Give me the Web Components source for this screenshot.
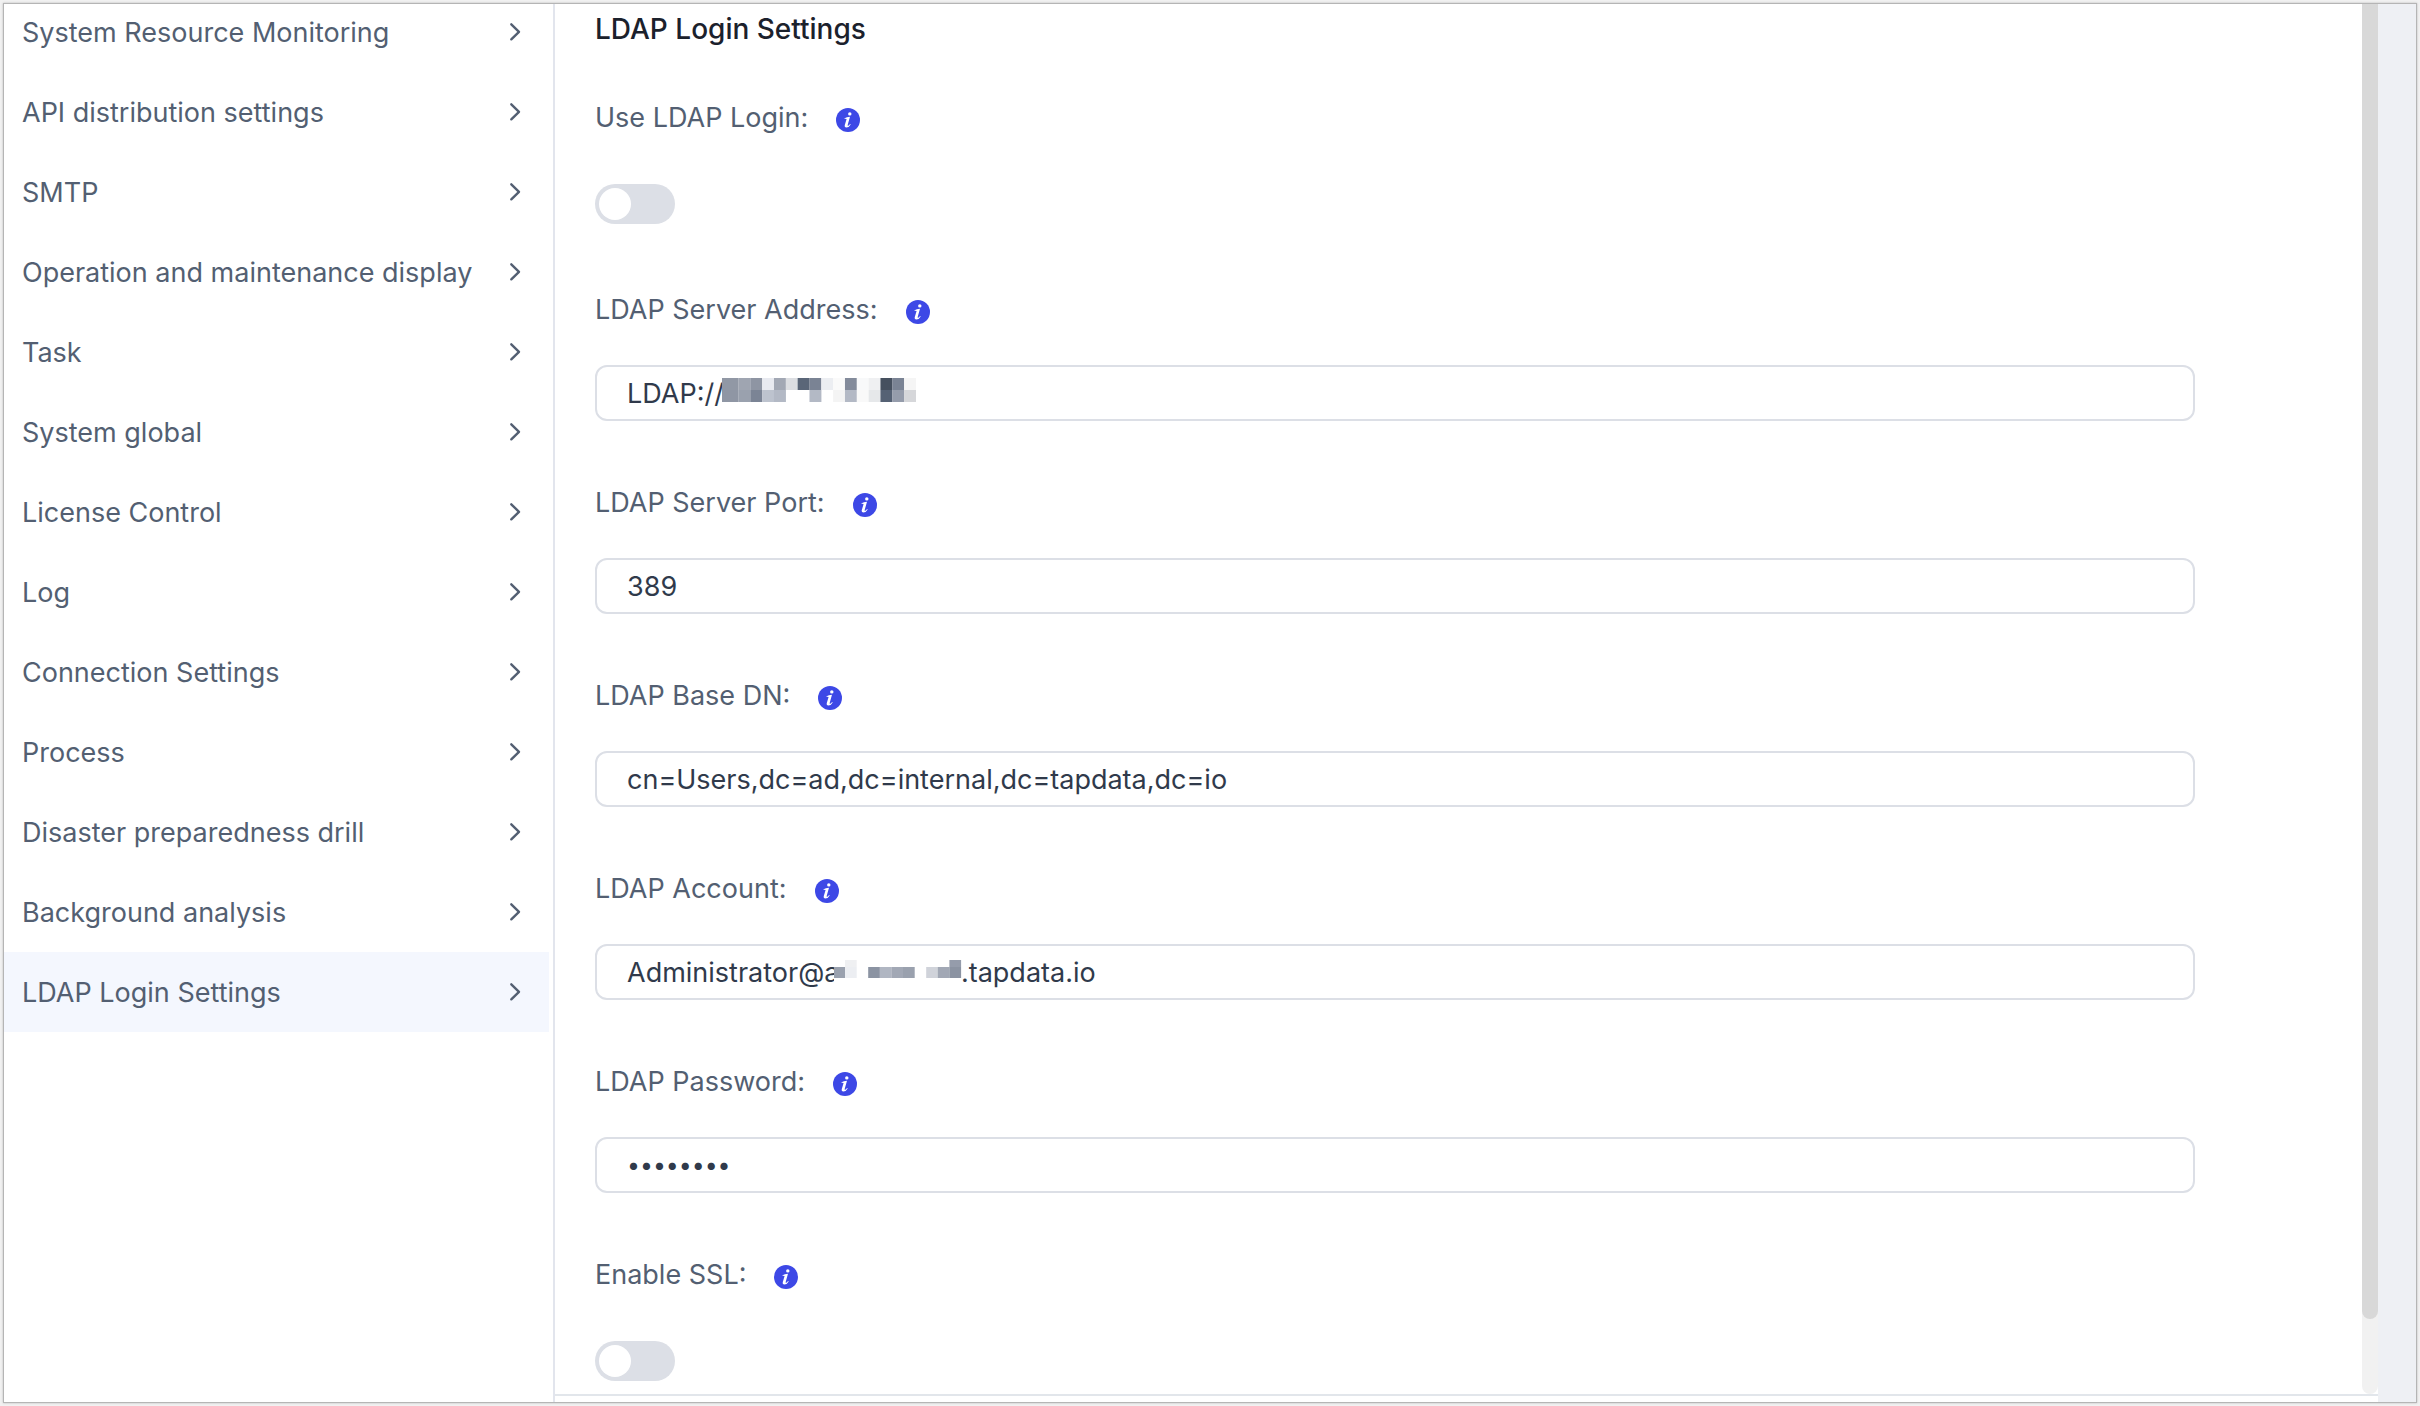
<!DOCTYPE html>
<html lang="en">
<head>
<meta charset="utf-8">
<title>LDAP Login Settings</title>
<style>
html,body{height:100%}
body{margin:0;background:#f1f1f1;font-family:Inter,"Liberation Sans",sans-serif;font-size:27px;color:#535f72}
</style>
</head>
<body>
<settings-app></settings-app>
<script>
const make = (name, html, after) => customElements.define(name, class extends HTMLElement {
  connectedCallback() {
    if (this.shadowRoot) return;
    const root = this.attachShadow({ mode: 'open' });
    const t = document.createElement('template');
    t.innerHTML = html;
    root.append(t.content.cloneNode(true));
    if (after) after.call(this, root);
  }
});

make('menu-item', `
<style>
:host{display:block}
a{display:flex;align-items:center;justify-content:space-between;height:80px;box-sizing:border-box;padding:0 28px 0 18px;color:inherit;text-decoration:none;white-space:nowrap}
:host([active]) a{background:#f4f7fe}
svg{width:12px;height:20px;flex:none}
</style>
<a href="#"><slot></slot><svg viewBox="0 0 12 20" fill="none" stroke="#535f72" stroke-width="2.4" stroke-linecap="round" stroke-linejoin="round"><path d="M2.3 2.3 10 9.8 2.3 17.3"/></svg></a>`,
function (root) { if (this.hasAttribute('active')) root.querySelector('a').setAttribute('aria-current', 'page'); });

make('info-icon', `
<style>:host{display:block;width:24px;height:24px}svg{display:block}</style>
<svg width="24" height="24" viewBox="0 0 24 24"><circle cx="12" cy="12" r="12" fill="#3d48e6"/><circle cx="13.8" cy="5.9" r="1.7" fill="#fff"/><path d="M8.6 10.3Q10.6 9 14 8.8L11.8 16.6Q11.4 18.2 12.3 17.8 13.2 17.2 14.1 16L14.7 16.4Q12.9 19.6 10.3 19.6 8.2 19.4 8.8 17.1L10.6 11.1Q10.1 10.6 8.6 11Z" fill="#fff"/></svg>`);

const labelCss = `
:host{display:block;padding-bottom:49px}
.label{display:flex;align-items:center;gap:28px;height:64px;margin-bottom:24px}
.label info-icon{margin-top:6px}`;

make('text-field', `
<style>${labelCss}
.control{position:relative}
input{display:block;box-sizing:border-box;width:100%;height:56px;padding:0 30px;border:2px solid #dcdfe6;border-radius:12px;background:#fff;color:#303a4b;font:inherit;outline:none}
input[type=password]{font-size:23px}
::slotted(*){position:absolute;top:0;left:0}
</style>
<div class="label"><label for="f"></label><info-icon></info-icon></div>
<div class="control"><input id="f"><slot></slot></div>`,
function (root) {
  root.querySelector('label').textContent = this.getAttribute('label');
  const input = root.querySelector('input');
  input.type = this.getAttribute('type') || 'text';
  input.value = this.getAttribute('value');
});

make('switch-field', `
<style>${labelCss}
:host{padding-bottom:48px}
.control{display:flex;align-items:center;height:56px;box-sizing:border-box;padding-top:6px}
input{appearance:none;display:flex;align-items:center;box-sizing:border-box;width:80px;height:40px;margin:0;padding:4px;border-radius:20px;background:#dcdfe6}
input::before{content:"";width:32px;height:32px;border-radius:50%;background:#fff}
input:checked{background:#3d48e6;justify-content:flex-end}
</style>
<div class="label"><label for="f"></label><info-icon></info-icon></div>
<div class="control"><input id="f" type="checkbox" role="switch"></div>`,
function (root) { root.querySelector('label').textContent = this.getAttribute('label'); });

/* Redaction blocks: rows of hex colours drawn over part of a value; "heights" lists the row heights */
make('pixel-mask', `
<style>:host{display:block;pointer-events:none}svg{display:block}</style><svg></svg>`,
function (root) {
  const n = k => +this.getAttribute(k);
  const svg = root.querySelector('svg'), w = n('w'), h = n('h');
  svg.setAttribute('width', w); svg.setAttribute('height', h);
  svg.style.margin = n('y') + 'px 0 0 ' + n('x') + 'px';
  const heights = this.getAttribute('heights').split(' ').map(Number);
  const off = n('first') - n('cell');
  let out = `<rect width="${w}" height="${h}" fill="#fff"/>`, y = 0;
  this.getAttribute('rows').split('/').forEach((r, j) => {
    r.trim().split(' ').forEach((c, i) => {
      if (c === '-') return;
      const x0 = i ? off + n('cell') * i : 0, x1 = off + n('cell') * (i + 1);
      out += `<rect x="${x0}" y="${y}" width="${x1 - x0 + 0.1}" height="${heights[j]}" fill="#${c}"/>`;
    });
    y += heights[j];
  });
  svg.innerHTML = out;
});

make('settings-app', `
<style>
:host{display:flex;box-sizing:border-box;height:100%;padding:3px}
.frame{flex:1;display:flex;min-width:0;border:1px solid #b5b5b5;box-shadow:0 0 2px #bbb;background:#fff;overflow:hidden}
nav{flex:none;width:545px;padding-right:4px;border-right:2px solid #e2e5ed;overflow:hidden}
.list{margin-top:-12px}
.right{flex:1;min-width:0;display:flex;flex-direction:column;overflow:hidden}
.view{flex:1;min-height:0;display:flex;border-bottom:2px solid #e2e6eb}
.foot{height:6px;flex:none}
main{flex:1;min-width:0;overflow:hidden;padding:0 167px 0 40px}
h1{margin:0;padding-bottom:31px;font-size:28px;line-height:50px;font-weight:500;color:#1b212c}
.bar{flex:none;width:16px;background:#f1f1f1;border-radius:0 0 8px 8px}
.thumb{height:94.6%;background:#d8d8d8;border-radius:0 0 8px 8px}
.gutter{flex:none;width:38px;background:#eef0f4}
</style>
<div class="frame">
<nav aria-label="Settings"><div class="list">
<menu-item>System Resource Monitoring</menu-item>
<menu-item>API distribution settings</menu-item>
<menu-item>SMTP</menu-item>
<menu-item>Operation and maintenance display</menu-item>
<menu-item>Task</menu-item>
<menu-item>System global</menu-item>
<menu-item>License Control</menu-item>
<menu-item>Log</menu-item>
<menu-item>Connection Settings</menu-item>
<menu-item>Process</menu-item>
<menu-item>Disaster preparedness drill</menu-item>
<menu-item>Background analysis</menu-item>
<menu-item active>LDAP Login Settings</menu-item>
</div></nav>
<div class="right"><div class="view"><main>
<h1>LDAP Login Settings</h1>
<switch-field label="Use LDAP Login:"></switch-field>
<text-field label="LDAP Server Address:" value="LDAP://"><pixel-mask x="127" y="13" w="194" h="24" cell="11.83" first="16.5" heights="12 12" rows="9198a5 9fa5b1 8e95a3 e8eaf0 a2a8b4 dcdee2 5a6678 7a8394 eceef2 fafafa 838b9b f8f9fa eff0f2 46505f 7a8394 f5f5f5/8f96a4 9aa1ae 7b8495 bdc3ce b3b9c5 - - b3b9c5 - f4f4f4 b3b9c5 f9f9f9 e6e8ea 556174 959cab d6d7da"></pixel-mask></text-field>
<text-field label="LDAP Server Port:" value="389"></text-field>
<text-field label="LDAP Base DN:" value="cn=Users,dc=ad,dc=internal,dc=tapdata,dc=io"></text-field>
<text-field label="LDAP Account:" value="Administrator@a                .tapdata.io"><pixel-mask x="239" y="16" w="128" h="24" cell="11.6" first="11" heights="7 11" rows="- eff0f2 - - - - - - - - 959cab/9aa1ae eceef2 - 8b93a2 b0b6c2 a2a8b5 9aa1ae - d0d3da a2a8b5 8b93a2"></pixel-mask></text-field>
<text-field label="LDAP Password:" type="password" value="password"></text-field>
<switch-field label="Enable SSL:"></switch-field>
</main><div class="bar"><div class="thumb"></div></div></div><div class="foot"></div></div>
<div class="gutter"></div>
</div>`);
</script>
</body>
</html>
